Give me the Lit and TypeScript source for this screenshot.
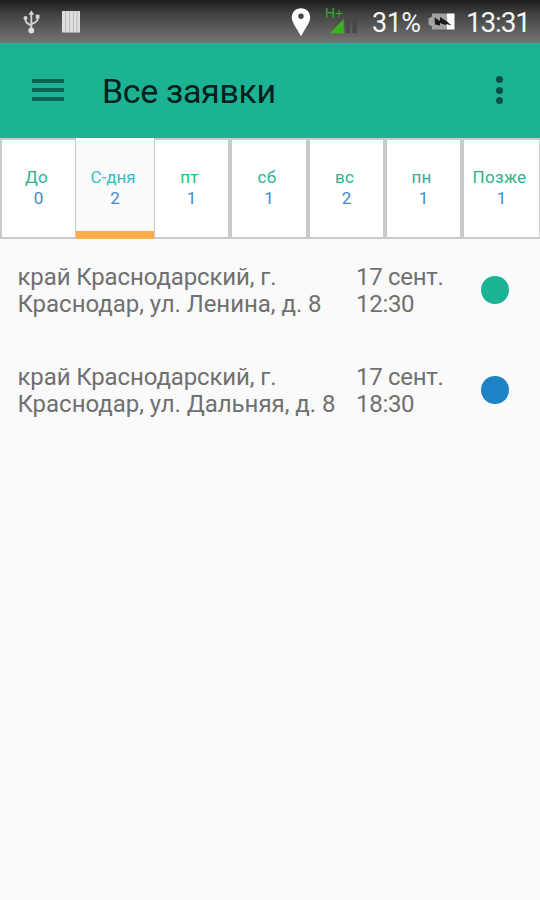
import { LitElement, html, css } from "lit";
import { customElement, property } from "lit/decorators.js";
import { classMap } from "lit/directives/class-map.js";

@customElement("status-bar")
class StatusBar extends LitElement {
  static styles = css`
    :host {
      display: flex;
      height: 43px;
      background: linear-gradient(#1c1c1c, #434343 35%, #757575);
      color: #f4f4f4;
    }
    .icons { flex: none; display: block; }
    .spacer { flex: 1; }
    .value { font-size: 28px; line-height: 46px; white-space: nowrap; }
    .percent { width: 48px; font-size: 27px; letter-spacing: -0.5px; }
    .clock { width: 74px; letter-spacing: -1.2px; }
    .net { font: 14px "Liberation Sans", sans-serif; }
  `;
  render() {
    return html`
      <svg class="icons" width="100" height="43" viewBox="0 0 100 43">
        <g fill="none" stroke="#d2d2d2" stroke-width="1.9">
          <path d="M31.3 13v17M25.6 18v2q0 3 5.700 5.500M37.600 17.500v1.500q0 3-6.300 5" />
        </g>
        <path fill="#d8d8d8" d="M31.300 10.500l2.900 4.200h-5.800z" />
        <circle cx="25.500" cy="18" r="2" fill="#d2d2d2" />
        <path fill="#d2d2d2" d="M35.700 14.700h3.800v3.800h-3.800z" />
        <circle cx="31.300" cy="30.500" r="2.900" fill="#dedede" />
        <path fill="#dedede" d="M62 11h18v21.500h-18z" />
        <path stroke="#bcbcbc" stroke-width="1" d="M65.500 11v21.500M69.500 11v21.500M73.500 11v21.500M77 11v21.500" />
      </svg>
      <span class="spacer"></span>
      <svg class="icons" width="82" height="43" viewBox="290 0 82 43">
        <path fill="#fff" fill-rule="evenodd" d="M301 8.300c5.400 0 9.200 3.900 9.200 9 0 5.800-5.200 11.200-9.200 19-4-7.800-9.200-13.200-9.200-19 0-5.100 3.800-9 9.200-9zm0 5.300a2.700 2.700 0 100 5.400 2.700 2.700 0 000-5.400z" />
        <text class="net" x="325" y="17.500" fill="#39a82d" textLength="18" lengthAdjust="spacingAndGlyphs">H+</text>
        <path fill="#36b51d" d="M330 33.300L343.700 19v14.300z" />
        <path fill="#484848" d="M345.500 17h4.300v16.300h-4.300zM352.300 17h4.500v16.300h-4.500z" />
      </svg>
      <span class="value percent">31%</span>
      <svg class="icons" width="46" height="43" viewBox="420 0 46 43">
        <path fill="#a2a2a2" d="M432 13.500h15v16h-15v-3l-3.500-2v-6l3.500-2z" />
        <path fill="#fff" d="M447 13.500h7.500v16h-7.500z" />
        <path fill="#1a1a1a" d="M434.500 17.500l5.500 3.500v-4l7 4.500 4.500 4-5-1.500-1 1-5.500-2v2.500l-5-1z" />
      </svg>
      <span class="value clock">13:31</span>
    `;
  }
}

@customElement("app-bar")
class AppBar extends LitElement {
  static styles = css`
    :host {
      display: flex;
      align-items: center;
      height: 95px;
      box-sizing: border-box;
      padding: 0 37px 1px 32px;
      background: #1cb394;
    }
    .menu { display: flex; flex-direction: column; gap: 5px; width: 32px; }
    .line { height: 4px; background: #096351; }
    .title { flex: 1; margin-left: 38px; font-size: 34px; line-height: 48px; letter-spacing: -0.35px; color: #03201b; padding-top: 1px; white-space: nowrap; }
    .more { display: flex; flex-direction: column; gap: 3.300px; }
    .dot { width: 7px; height: 7px; border-radius: 50%; background: #084f44; }
  `;
  render() {
    return html`
      <div class="menu"><i class="line"></i><i class="line"></i><i class="line"></i></div>
      <div class="title">Все заявки</div>
      <div class="more"><i class="dot"></i><i class="dot"></i><i class="dot"></i></div>
    `;
  }
}

interface Day { label: string; count: number; active?: boolean; }

@customElement("day-tabs")
class DayTabs extends LitElement {
  @property({ attribute: false }) days: Day[] = [];
  static styles = css`
    :host {
      display: grid;
      grid-template-columns: 76px 78px 76px 78px 77px 77px 78px;
      height: 101px;
    }
    .tab {
      box-sizing: border-box;
      border: solid #cacaca;
      border-width: 2px 2px 2px 2px;
      background: #fff;
      padding-top: 27px;
      text-align: center;
      font-size: 17px;
      line-height: 21px;
    }
    .tab:first-child { border-right-width: 1px; }
    .tab:nth-child(3) { border-left-width: 1px; }
    .tab:last-child { border-right-width: 1px; }
    .active { background: #fafafa; border-width: 0 0 8px; border-bottom-color: #ffab4a; padding-top: 29px; }
    .label { color: #2db38e; letter-spacing: 0.3px; margin-right: 3px; margin-left: -1px; white-space: nowrap; }
    .active .label { color: #36bfc0; letter-spacing: 0; }
    .count { color: #4389cb; }
  `;
  render() {
    return this.days.map(d => html`
      <div class=${classMap({ tab: true, active: !!d.active })}>
        <div class="label">${d.label}</div>
        <div class="count">${d.count}</div>
      </div>`);
  }
}

interface Order { address: string[]; date: string; time: string; status: string; }

@customElement("order-row")
class OrderRow extends LitElement {
  @property({ attribute: false }) order!: Order;
  static styles = css`
    :host {
      display: grid;
      grid-template-columns: 338.500px 124.500px 30px;
      height: 100px;
      box-sizing: border-box;
      padding: 25px 0 0 17.500px;
      font-size: 24px;
      line-height: 27px;
      color: #707070;
      white-space: nowrap;
    }
    .address { letter-spacing: -0.03px; }
    .address :first-child { letter-spacing: -0.12px; }
    .when { letter-spacing: -0.3px; }
    .mark { width: 28px; height: 28px; margin-top: 12px; border-radius: 50%; }
    .new { background: #1cb394; }
    .assigned { background: #1c84c6; }
  `;
  render() {
    const o = this.order;
    return html`
      <div class="address">${o.address.map(line => html`<div>${line}</div>`)}</div>
      <div class="when"><div>${o.date}</div><div>${o.time}</div></div>
      <div class="mark ${o.status}"></div>
    `;
  }
}

@customElement("app-root")
class AppRoot extends LitElement {
  static styles = css`
    :host {
      display: block;
      height: 900px;
      overflow: hidden;
      background: #fafafa;
      font-family: Roboto, "Liberation Sans", sans-serif;
    }
  `;
  days: Day[] = [
    { label: "До", count: 0 },
    { label: "С-дня", count: 2, active: true },
    { label: "пт", count: 1 },
    { label: "сб", count: 1 },
    { label: "вс", count: 2 },
    { label: "пн", count: 1 },
    { label: "Позже", count: 1 },
  ];
  orders: Order[] = [
    { address: ["край Краснодарский, г.", "Краснодар, ул. Ленина, д. 8"], date: "17 сент.", time: "12:30", status: "new" },
    { address: ["край Краснодарский, г.", "Краснодар, ул. Дальняя, д. 8"], date: "17 сент.", time: "18:30", status: "assigned" },
  ];
  render() {
    return html`
      <status-bar></status-bar>
      <app-bar></app-bar>
      <day-tabs .days=${this.days}></day-tabs>
      ${this.orders.map(o => html`<order-row .order=${o}></order-row>`)}
    `;
  }
}
